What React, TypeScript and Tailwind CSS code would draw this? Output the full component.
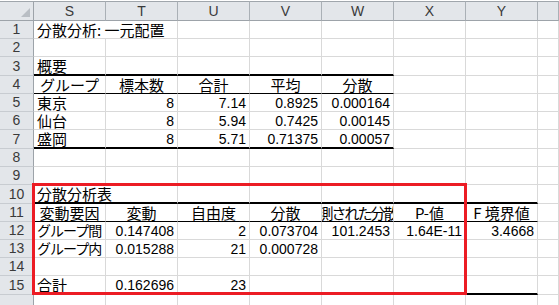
import React from "react";

type Align = "l" | "r" | "c";
type Cell = { t: string; a: Align; n?: boolean; span?: number; cls?: string };
type B = "g" | "thin" | "thick";

const L = (t: string, span = 1, cls = ""): Cell => ({ t, a: "l", span, cls });
const C = (t: string, cls = ""): Cell => ({ t, a: "c", cls });
const N = (t: string): Cell => ({ t, a: "r", n: true });

const rows: { cells: (Cell | null)[]; b: B[] }[] = [
  { cells: [L("分散分析: 一元配置", 2)], b: [] },
  { cells: [], b: [] },
  { cells: [L("概要")], b: ["thick", "thick", "thick", "thick", "thick"] },
  { cells: [C("グループ"), C("標本数"), C("合計"), C("平均"), C("分散")], b: ["thin", "thin", "thin", "thin", "thin"] },
  { cells: [L("東京"), N("8"), N("7.14"), N("0.8925"), N("0.000164")], b: [] },
  { cells: [L("仙台"), N("8"), N("5.94"), N("0.7425"), N("0.00145")], b: [] },
  { cells: [L("盛岡"), N("8"), N("5.71"), N("0.71375"), N("0.00057")], b: ["thick", "thick", "thick", "thick", "thick"] },
  { cells: [], b: [] },
  { cells: [], b: [] },
  { cells: [L("分散分析表", 2)], b: ["thick", "thick", "thick", "thick", "thick", "thick", "thick"] },
  {
    cells: [
      C("変動要因"),
      C("変動"),
      C("自由度"),
      C("分散"),
      C("観測された分散比", "tracking-[-2px]"),
      C("P-値"),
      C("F 境界値"),
    ],
    b: ["thin", "thin", "thin", "thin", "thin", "thin", "thin"],
  },
  {
    cells: [
      L("グループ間", 1, "text-[14px] tracking-[-1px]"),
      N("0.147408"),
      N("2"),
      N("0.073704"),
      N("101.2453"),
      N("1.64E-11"),
      N("3.4668"),
    ],
    b: [],
  },
  { cells: [L("グループ内", 1, "text-[14px] tracking-[-1px]"), N("0.015288"), N("21"), N("0.000728")], b: [] },
  { cells: [], b: [] },
  { cells: [L("合計"), N("0.162696"), N("23")], b: ["thick", "thick", "thick", "thick", "thick", "thick", "thick"] },
  { cells: [], b: [] },
];

const COLS = ["S", "T", "U", "V", "W", "X", "Y", ""];

function DataCell({ cell, b, last }: { cell: Cell | null; b: B; last: boolean }) {
  const border =
    b === "thick"
      ? "border-b-2 border-b-black"
      : b === "thin"
      ? "border-b border-b-black"
      : last
      ? "border-b-0"
      : "border-b border-b-[#d9d9d9]";
  const span = cell?.span === 2 ? "col-span-2" : "";
  const align = !cell ? "" : cell.a === "r" ? "justify-end" : cell.a === "c" ? "justify-center" : "justify-start";
  const font = cell?.n
    ? "font-['Liberation_Sans',sans-serif] text-[14px] leading-[16px]"
    : "font-['Noto_Sans_CJK_JP',sans-serif] text-[15px] leading-[17px]";
  return (
    <div
      className={`${span} ${border} border-r border-r-[#d9d9d9] bg-white flex items-end ${align} px-[3px] overflow-hidden whitespace-nowrap text-black ${font}`}
    >
      {cell ? <span className={`shrink-0 ${cell.cls ?? ""}`}>{cell.t}</span> : null}
    </div>
  );
}

export default function App() {
  return (
    <div className="relative w-[559px] h-[305px] overflow-hidden bg-white pt-px">
      <div className="grid grid-cols-[34px_repeat(7,72px)_1fr] grid-rows-[20px_18px_18px_19px_18px_18px_18px_19px_18px_18px_19px_18px_18px_18px_18px_19px_10px]">
        <div className="relative bg-[#e3e6ea] border-t border-t-[#a0a6ac] border-r border-r-[#9da3a9] border-b border-b-[#9da3a9]">
          <svg className="absolute right-[3px] bottom-[3px]" width="9" height="9" viewBox="0 0 9 9">
            <polygon points="9,0 9,9 0,9" fill="#b9bec4" />
          </svg>
        </div>
        {COLS.map((c, i) => (
          <div
            key={i}
            className="bg-[#e3e6ea] border-t border-t-[#a0a6ac] border-r border-r-[#aab0b6] border-b border-b-[#9da3a9] flex items-center justify-center font-['Liberation_Sans',sans-serif] text-[14px] text-[#3a3a3a]"
          >
            {c}
          </div>
        ))}
        {rows.map((row, ri) => {
          const out: React.ReactNode[] = [];
          const last = ri === rows.length - 1;
          out.push(
            <div
              key={`h${ri}`}
              className={`bg-[#e3e6ea] border-r border-r-[#9da3a9] ${last ? "" : "border-b border-b-[#c8ccd1]"} flex items-center justify-center font-['Liberation_Sans',sans-serif] text-[14px] text-[#3a3a3a]`}
            >
              {last ? "" : ri + 1}
            </div>
          );
          let ci = 0;
          while (ci < 8) {
            const cell = row.cells[ci] ?? null;
            out.push(<DataCell key={`${ri}-${ci}`} cell={cell} b={row.b[ci] ?? "g"} last={last} />);
            ci += cell?.span === 2 ? 2 : 1;
          }
          return <React.Fragment key={ri}>{out}</React.Fragment>;
        })}
      </div>
      <div className="absolute left-[32px] top-[183px] w-[435px] h-[112px] border-[3px] border-[#ec1c24] pointer-events-none" />
    </div>
  );
}
